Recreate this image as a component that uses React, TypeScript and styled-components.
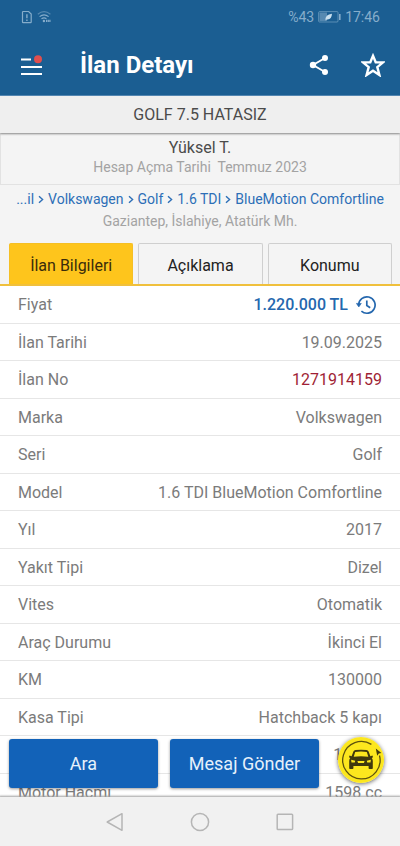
import React from "react";
import styled, { createGlobalStyle } from "styled-components";

const GlobalStyle = createGlobalStyle`
  * { box-sizing: border-box; }
  body { margin: 0; background: #f4f4f4; }
  button { font: inherit; border: 0; margin: 0; padding: 0; background: none; cursor: pointer; }
`;

const Screen = styled.div`
  display: flex;
  flex-direction: column;
  height: 100vh;
  font-family: Roboto, "Noto Sans", sans-serif;
  font-size: 16px;
  color: #7b7b7b;
  background: #f4f4f4;
`;

const Header = styled.header`
  flex: none;
  color: #fff;
  background: #1b5e92;
  border-bottom: 1px solid #4f86b4;
`;

const StatusBar = styled.div`
  display: flex;
  align-items: center;
  gap: 4px;
  height: 34px;
  padding: 0 20px 0 21px;
  font-size: 14px;
  line-height: 16px;
  color: #86adcb;
`;

const Spacer = styled.span`
  flex: 1;
`;

const AppBar = styled.div`
  display: flex;
  align-items: center;
  height: 61px;
  padding: 0 15px 0 20px;
`;

const IconButton = styled.button`
  display: flex;
  color: inherit;
`;

const ScreenTitle = styled.h1`
  flex: 1;
  margin: 0 0 0 37px;
  font-size: 24px;
  line-height: 28px;
  font-weight: 700;
`;

const AppActions = styled.div`
  display: flex;
  align-items: center;
  gap: 32px;
`;

const ListingTitle = styled.h2`
  position: relative;
  flex: none;
  margin: 0;
  padding: 7px 16px 6px;
  font-size: 16px;
  line-height: 24px;
  font-weight: 400;
  text-align: center;
  color: #4b4b4b;
  background: #efefef;
  box-shadow: 0 1px 2px #8c8c8c;
`;

const Seller = styled.section`
  flex: none;
  padding: 4px 8px 8px;
  border: 1px solid #e2e2e2;
  text-align: center;
`;

const SellerName = styled.div`
  font-size: 16px;
  line-height: 20px;
  color: #4b4b4b;
`;

const Muted = styled.div`
  font-size: 14px;
  line-height: 18px;
  text-align: center;
  white-space: pre;
  color: #a3a3a3;
`;

const Breadcrumbs = styled.nav`
  display: flex;
  flex: none;
  justify-content: center;
  align-items: center;
  gap: 4px;
  padding: 4px 8px 3px;
  font-size: 14px;
  line-height: 20px;
  white-space: nowrap;
  color: #2d6fb7;
`;

const Crumb = styled.a`
  color: inherit;
  text-decoration: none;
`;

const Tabs = styled.div`
  display: flex;
  flex: none;
  gap: 5px;
  margin-top: 13px;
  padding: 0 8px 0 9px;
  border-bottom: 2px solid #f0c03c;
`;

const Tab = styled.button<{ $active?: boolean }>`
  && {
    flex: 1 1 0;
    height: 41px;
    padding-top: 3px;
    font-size: 16px;
    color: ${(p) => (p.$active ? "#3a2c0b" : "#222")};
    background: ${(p) => (p.$active ? "#fec51c" : "#f4f4f4")};
    border: 1px solid ${(p) => (p.$active ? "#f5bf24" : "#cfcfcf")};
    border-bottom: 0;
    border-radius: 2px 2px 0 0;
  }
`;

const Content = styled.main`
  position: relative;
  flex: 1;
  min-height: 0;
  overflow: hidden;
  background: #fff;
`;

const Specs = styled.dl`
  height: 100%;
  margin: 0;
  overflow-y: auto;
  scrollbar-width: none;
`;

const Spec = styled.div`
  display: flex;
  align-items: center;
  justify-content: space-between;
  height: 38px;
  padding: 0 18px;
  border-bottom: 1px solid #e6e6e6;

  &:nth-child(even) {
    height: 37px;
  }
`;

const tones = { normal: "#7b7b7b", price: "#2467ae", number: "#a01f35" };

const Value = styled.dd<{ $tone: keyof typeof tones }>`
  display: flex;
  align-items: center;
  gap: 8px;
  margin: 0;
  padding-right: ${(p) => (p.$tone === "price" ? "6px" : "0")};
  font-weight: ${(p) => (p.$tone === "price" ? 500 : 400)};
  color: ${(p) => tones[p.$tone]};
`;

const FloatingActions = styled.div`
  position: absolute;
  left: 9px;
  right: 16px;
  bottom: 9px;
  display: flex;
  align-items: center;
  gap: 12px;
`;

const ActionButton = styled.button`
  && {
    flex: 1;
    height: 49px;
    font-size: 18px;
    color: #e6f1fb;
    background: #1262b8;
    border-radius: 3px;
    box-shadow: 0 1px 3px rgba(0, 0, 0, 0.4);
  }
`;

const CarButton = styled.button`
  && {
    display: flex;
    flex: none;
    align-self: flex-start;
    margin: -2px 0 0 7px;
    border-radius: 50%;
    box-shadow: 0 1px 4px rgba(0, 0, 0, 0.6);
  }
`;

const SystemNav = styled.nav`
  position: relative;
  display: flex;
  flex: none;
  justify-content: center;
  align-items: center;
  gap: 66px;
  height: 49px;
  color: #b5b5b5;
  background: #f1f1f1;
  box-shadow: 0 0 2px 1px #a0a0a0;
`;

const SimIcon = () => (
  <svg width="12" height="14" viewBox="0 0 12 14" fill="none" stroke="currentColor">
    <path d="M1.5 2.2Q1.5 1.5 2.2 1.5H7.6L10.2 4V12Q10.2 12.7 9.5 12.7H2.2Q1.5 12.7 1.5 12Z" strokeWidth="1.2" />
    <path d="M5.9 4.3V8.3M5.9 9.6V11" strokeWidth="1.4" />
  </svg>
);

const WifiIcon = () => (
  <svg width="15" height="14" viewBox="0 0 15 14" fill="none" stroke="currentColor" strokeWidth="1.2">
    <path d="M.8 4.2Q7 -.8 13.4 4.2" opacity=".55" />
    <path d="M2.6 6.6Q7 3 11.6 6.6M4.5 8.8Q7 6.8 9.4 8.7" />
    <circle cx="6.9" cy="11" r="1.2" fill="currentColor" stroke="none" />
    <path d="M9.6 9.8V12M11.3 9.8V12M12.9 9.8V12" />
  </svg>
);

const BatteryIcon = () => (
  <svg width="23" height="12" viewBox="0 0 23 12">
    <rect x=".6" y=".6" width="19.4" height="10.4" rx="1" fill="none" stroke="currentColor" strokeOpacity=".6" />
    <rect x="1.5" y="1.5" width="7.5" height="8.6" fill="currentColor" opacity=".55" />
    <path d="M7.5 9.5Q7 3.4 14 2.8Q13.6 9 8.8 8.4Z" fill="#c9dfee" />
    <rect x="21" y="3" width="1.6" height="6" fill="currentColor" />
  </svg>
);

const MenuIcon = () => (
  <svg width="23" height="22" viewBox="0 0 23 22">
    <path d="M1 5.5H11M1 13H22M1 20H22" stroke="#fff" strokeWidth="2" />
    <circle cx="18" cy="5.2" r="4" fill="#e04f4f" />
  </svg>
);

const ShareIcon = () => (
  <svg width="20" height="22" viewBox="0 0 20 22" fill="currentColor">
    <path d="M16 4L4 11L16 18" fill="none" stroke="currentColor" strokeWidth="1.9" />
    <circle cx="4" cy="11" r="3.2" />
    <circle cx="16" cy="4" r="3" />
    <circle cx="16" cy="18" r="3" />
  </svg>
);

const StarIcon = () => (
  <svg width="24" height="24" viewBox="0 0 24 24" fill="none" stroke="currentColor" strokeWidth="2.4">
    <path d="M12 2.8L14.7 9.2L22 9.4L16.3 14.1L18.4 22L12 17.7L5.6 22L7.7 14.1L2 9.4L9.3 9.2Z" />
  </svg>
);

const HistoryIcon = () => (
  <svg width="20" height="20" viewBox="0 0 20 20" fill="none" stroke="currentColor" strokeWidth="1.7">
    <path d="M2.7 10.2A8.2 8.2 0 1 1 5.4 16.1" />
    <path d="M.4 8.4L5.3 8.4L2.8 12Z" fill="currentColor" strokeWidth=".6" />
    <path d="M10.8 5.5V10.5L14.2 12.7" />
  </svg>
);

const CarIcon = () => (
  <svg width="46" height="46" viewBox="0 0 46 46">
    <circle cx="23" cy="23" r="23" fill="#fce71e" />
    <path d="M33.4 7.4A18.7 18.7 0 1 0 41.5 18.5" fill="none" stroke="#5d520e" strokeWidth="1.3" />
    <path d="M37.8 11.5L43.4 16L40.8 16.4L39.2 18.8Z" fill="#40390e" />
    <path
      d="M15.4 14.6Q16 13.2 17.5 13.1Q23 12.3 28.5 13.1Q30 13.2 30.6 14.6L32.4 19.2L34.5 18.6L35 20.3L33.7 21Q34.8 22.2 34.8 24V31.2Q34.8 32 34 32H31.4Q30.6 32 30.6 31.2V29H15.4V31.2Q15.4 32 14.6 32H12Q11.2 32 11.2 31.2V24Q11.2 22.2 12.3 21L11 20.3L11.5 18.6L13.6 19.2Z"
      fill="#40390e"
    />
    <path d="M17.2 15Q23 14.2 28.8 15L30.3 19.7Q23 18.7 15.7 19.7Z" fill="#fce71e" />
    <path d="M13.1 22.7L17.2 23.7L16.8 25.5H13.5ZM32.9 22.7L28.8 23.7L29.2 25.5H32.5ZM19.4 24H26.6L25.9 26.1H20.1Z" fill="#fce71e" />
  </svg>
);

const BackIcon = () => (
  <svg width="18" height="20" viewBox="0 0 18 20" fill="none" stroke="currentColor" strokeWidth="1.5">
    <path d="M16 1.7V18.3L1.2 10Z" strokeLinejoin="round" />
  </svg>
);

const HomeIcon = () => (
  <svg width="20" height="20" viewBox="0 0 20 20" fill="none" stroke="currentColor" strokeWidth="1.5">
    <circle cx="10" cy="10" r="8.6" />
  </svg>
);

const RecentsIcon = () => (
  <svg width="18" height="18" viewBox="0 0 18 18" fill="none" stroke="currentColor" strokeWidth="1.5">
    <rect x="1.2" y="1.2" width="15.4" height="15.4" rx=".8" />
  </svg>
);

const ChevronIcon = () => (
  <svg width="6" height="9" viewBox="0 0 6 9" fill="none" stroke="currentColor" strokeWidth="1.4">
    <path d="M1 1.2L4.6 4.5L1 7.8" />
  </svg>
);

const crumbs = ["...il", "Volkswagen", "Golf", "1.6 TDI", "BlueMotion Comfortline"];

const specs: { label: string; value: string; tone?: keyof typeof tones }[] = [
  { label: "Fiyat", value: "1.220.000 TL", tone: "price" },
  { label: "İlan Tarihi", value: "19.09.2025" },
  { label: "İlan No", value: "1271914159", tone: "number" },
  { label: "Marka", value: "Volkswagen" },
  { label: "Seri", value: "Golf" },
  { label: "Model", value: "1.6 TDI BlueMotion Comfortline" },
  { label: "Yıl", value: "2017" },
  { label: "Yakıt Tipi", value: "Dizel" },
  { label: "Vites", value: "Otomatik" },
  { label: "Araç Durumu", value: "İkinci El" },
  { label: "KM", value: "130000" },
  { label: "Kasa Tipi", value: "Hatchback 5 kapı" },
  { label: "Motor Gücü", value: "115 hp" },
  { label: "Motor Hacmi", value: "1598 cc" },
];

export default function App() {
  return (
    <>
      <GlobalStyle />
      <Screen>
        <Header>
          <StatusBar>
            <SimIcon />
            <WifiIcon />
            <Spacer />
            <span>%43</span>
            <BatteryIcon />
            <span>17:46</span>
          </StatusBar>
          <AppBar>
            <IconButton aria-label="Menü"><MenuIcon /></IconButton>
            <ScreenTitle>İlan Detayı</ScreenTitle>
            <AppActions>
              <IconButton aria-label="Paylaş"><ShareIcon /></IconButton>
              <IconButton aria-label="Favorilere ekle"><StarIcon /></IconButton>
            </AppActions>
          </AppBar>
        </Header>
        <ListingTitle>GOLF 7.5 HATASIZ</ListingTitle>
        <Seller>
          <SellerName>Yüksel T.</SellerName>
          <Muted>Hesap Açma Tarihi  Temmuz 2023</Muted>
        </Seller>
        <Breadcrumbs aria-label="Kategori">
          {crumbs.map((crumb, i) => (
            <React.Fragment key={crumb}>
              {i > 0 && <ChevronIcon />}
              <Crumb href="#">{crumb}</Crumb>
            </React.Fragment>
          ))}
        </Breadcrumbs>
        <Muted>Gaziantep, İslahiye, Atatürk Mh.</Muted>
        <Tabs role="tablist">
          <Tab role="tab" aria-selected="true" $active>İlan Bilgileri</Tab>
          <Tab role="tab" aria-selected="false">Açıklama</Tab>
          <Tab role="tab" aria-selected="false">Konumu</Tab>
        </Tabs>
        <Content>
          <Specs>
            {specs.map(({ label, value, tone = "normal" }) => (
              <Spec key={label}>
                <dt>{label}</dt>
                <Value $tone={tone}>
                  {value}
                  {tone === "price" && <HistoryIcon />}
                </Value>
              </Spec>
            ))}
          </Specs>
          <FloatingActions>
            <ActionButton>Ara</ActionButton>
            <ActionButton>Mesaj Gönder</ActionButton>
            <CarButton aria-label="Araç değerleme"><CarIcon /></CarButton>
          </FloatingActions>
        </Content>
        <SystemNav aria-label="Sistem">
          <IconButton aria-label="Geri"><BackIcon /></IconButton>
          <IconButton aria-label="Ana ekran"><HomeIcon /></IconButton>
          <IconButton aria-label="Son uygulamalar"><RecentsIcon /></IconButton>
        </SystemNav>
      </Screen>
    </>
  );
}
